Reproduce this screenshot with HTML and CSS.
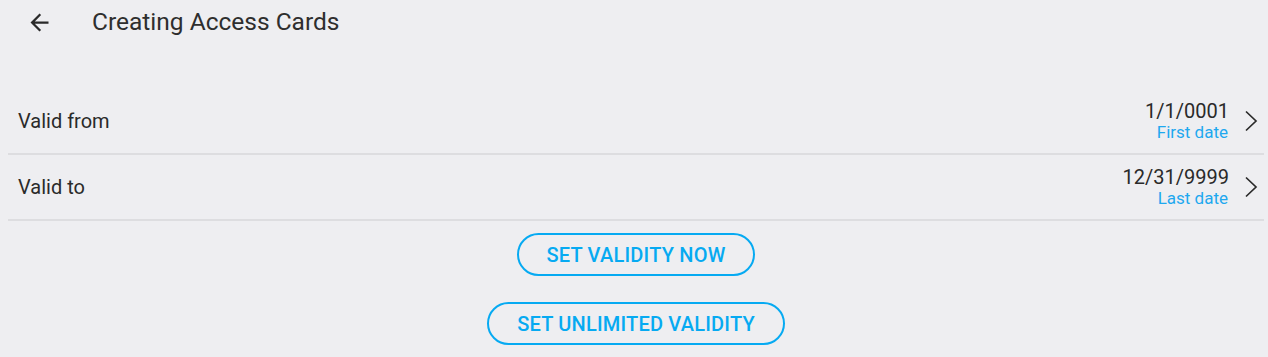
FILE: index.html
```html
<!DOCTYPE html>
<html lang="en">
<head>
<meta charset="utf-8">
<title>Creating Access Cards</title>
<link rel="stylesheet" href="styles.css">
</head>
<body>
<header class="appbar">
  <button class="back" aria-label="Back">
    <svg viewBox="0 0 24 24" width="27" height="27"><path d="M20 11H7.83l5.59-5.59L12 4l-8 8 8 8 1.41-1.41L7.83 13H20v-2z" fill="#2a2a2a"/></svg>
  </button>
  <h1 class="title">Creating Access Cards</h1>
</header>
<main class="content">
  <ul class="list">
    <li class="row">
      <span class="label">Valid from</span>
      <span class="value">
        <span class="date">1/1/0001</span>
        <span class="sub">First date</span>
      </span>
      <svg class="chev" viewBox="0 0 14 22" width="14" height="22"><polyline points="2,1.5 12,11 2,20.5" fill="none" stroke="#2a2a2a" stroke-width="1.7"/></svg>
    </li>
    <li class="row">
      <span class="label">Valid to</span>
      <span class="value">
        <span class="date">12/31/9999</span>
        <span class="sub">Last date</span>
      </span>
      <svg class="chev" viewBox="0 0 14 22" width="14" height="22"><polyline points="2,1.5 12,11 2,20.5" fill="none" stroke="#2a2a2a" stroke-width="1.7"/></svg>
    </li>
  </ul>
  <div class="actions">
    <button class="outline">SET VALIDITY NOW</button>
    <button class="outline">SET UNLIMITED VALIDITY</button>
  </div>
</main>
</body>
</html>
```
FILE: styles.css
```css
html, body {
  margin: 0;
  padding: 0;
  background: #eeeef1;
  font-family: Roboto, "Liberation Sans", sans-serif;
  color: #2a2a2a;
}

.appbar {
  height: 44px;
  display: flex;
  align-items: center;
}

.back {
  margin-left: 26px;
  width: 27px;
  height: 27px;
  padding: 0;
  border: 0;
  background: none;
  display: flex;
  align-items: center;
  justify-content: center;
}

.back svg {
  display: block;
}

.title {
  margin: 0 0 0 39px;
  font-size: 24.5px;
  font-weight: 400;
  line-height: 28px;
  color: #2e2e2e;
}

.content {
  padding: 0 4px 0 8px;
  margin-top: 45px;
}

.list {
  list-style: none;
  margin: 0;
  padding: 0;
}

.row {
  height: 64px;
  border-bottom: 2px solid #dddde0;
  display: flex;
  align-items: center;
  padding: 0 6px 0 10px;
}

.label {
  flex: 1;
  font-size: 20px;
  line-height: 24px;
}

.value {
  display: flex;
  flex-direction: column;
  align-items: flex-end;
}

.date {
  font-size: 20px;
  line-height: 22px;
}

.sub {
  font-size: 17px;
  line-height: 20px;
  color: #1ea8ef;
  margin-right: 1px;
}

.chev {
  display: block;
  margin-left: 15px;
}

.actions {
  display: flex;
  flex-direction: column;
  align-items: center;
  gap: 26px;
  margin-top: 12px;
}

.outline {
  height: 43px;
  padding: 0 28px;
  border: 2px solid #06aaf2;
  border-radius: 22px;
  background: transparent;
  color: #06aaf2;
  font-family: Roboto, "Liberation Sans", sans-serif;
  font-size: 20px;
  font-weight: 500;
  letter-spacing: 0.2px;
}
```
